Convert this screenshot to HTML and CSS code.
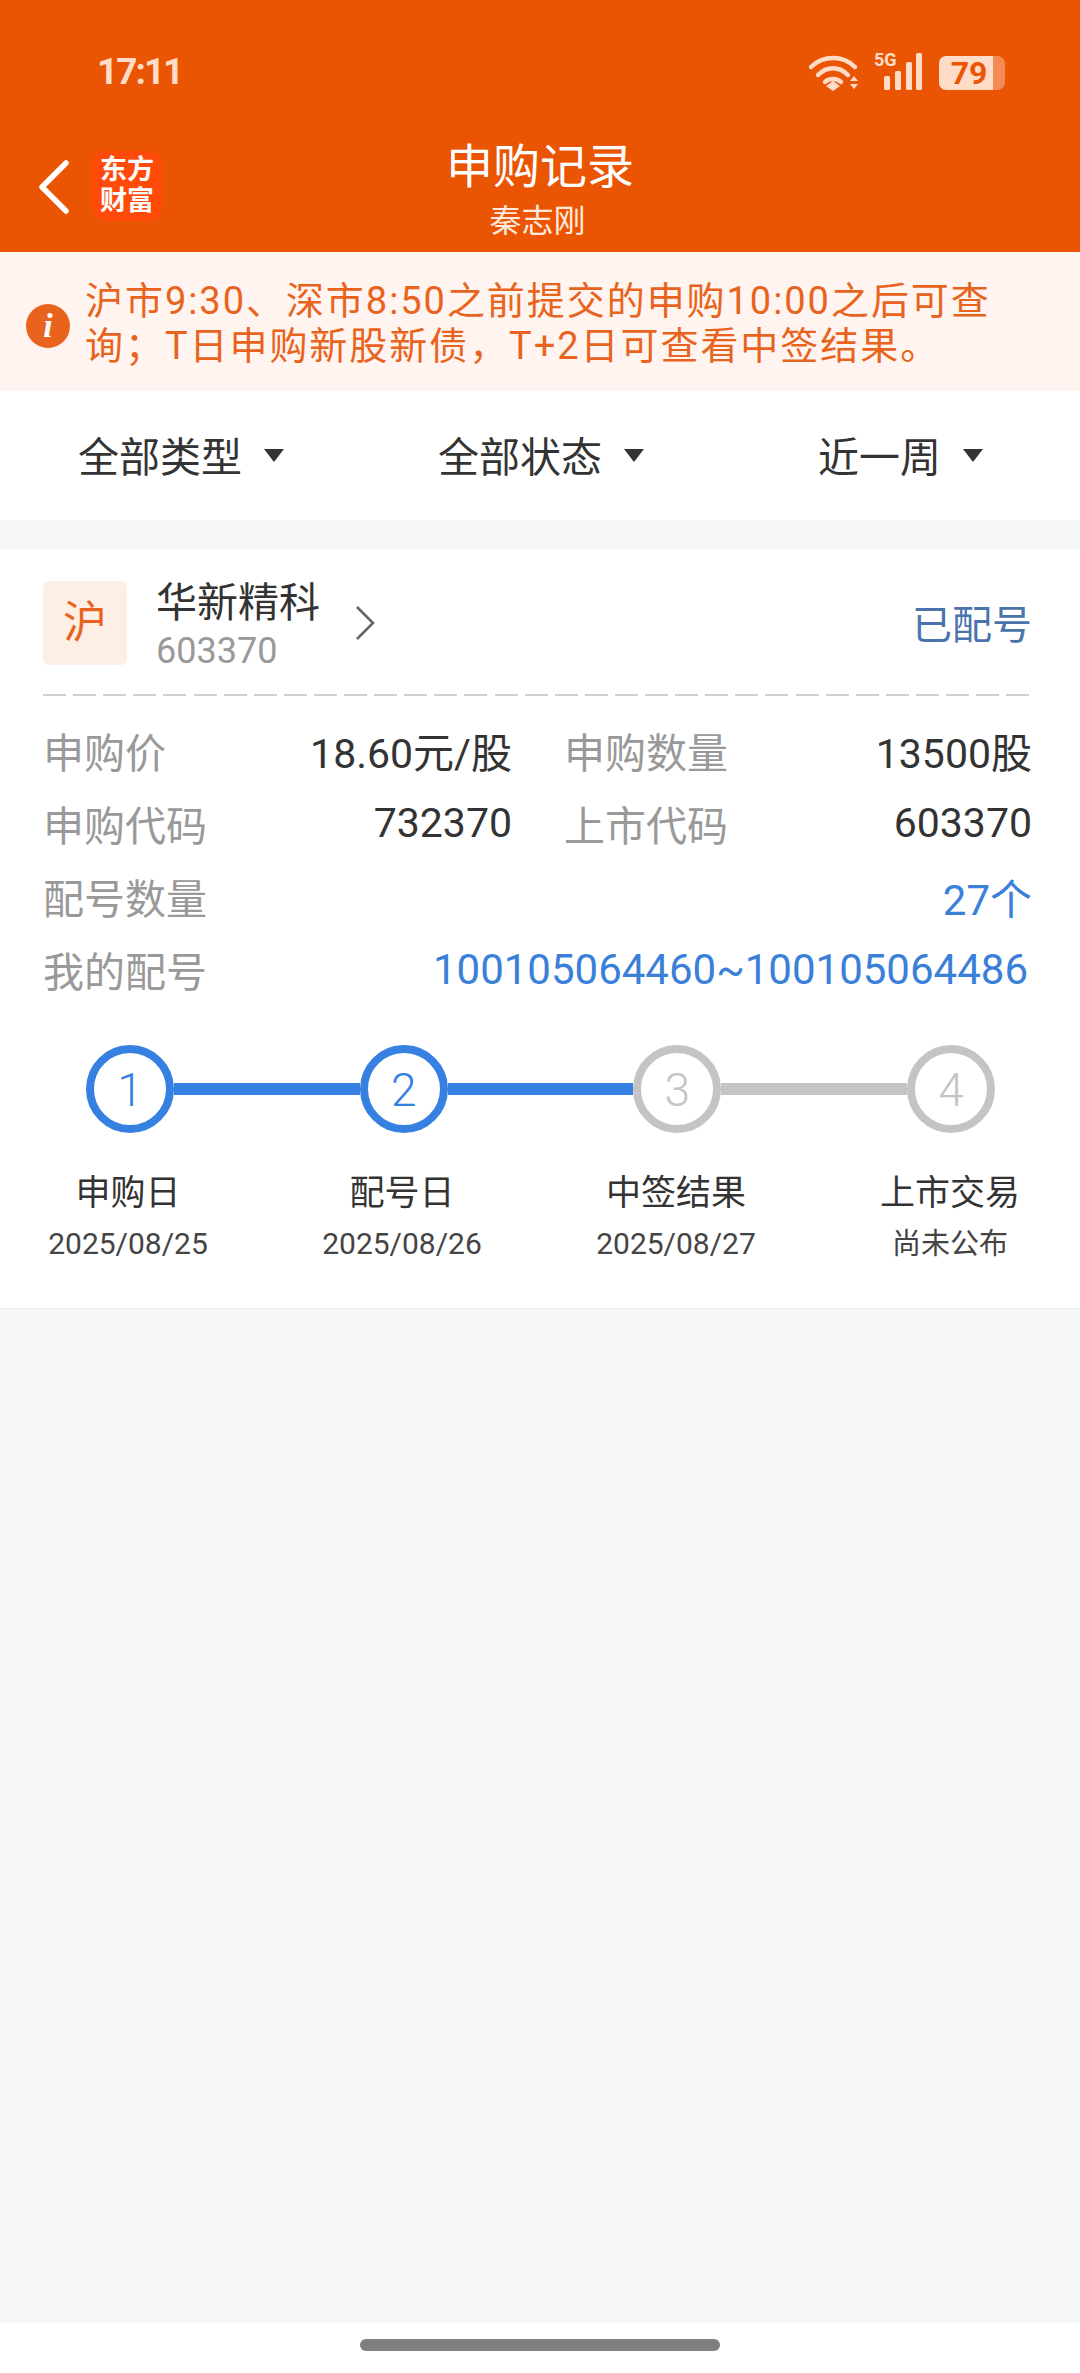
FILE: index.html
```html
<!DOCTYPE html>
<html lang="zh-CN">
<head>
  <meta charset="UTF-8" />
  <meta name="viewport" content="width=device-width, initial-scale=1.0"/>
  <title>申购记录</title>
  <link rel="stylesheet" href="styles.css">
</head>
<body>
  <header class="top">
    <div class="status">
      <span class="time">17:11</span>
      <div class="status-icons">
        <svg class="wifi" width="52" height="40" viewBox="0 0 52 40">
          <path d="M2 14C14 2 34 2 46 14" fill="none" stroke="#ffdcc8" stroke-width="4.5" stroke-linecap="round"/>
          <path d="M9 22C18 13 30 13 39 22" fill="none" stroke="#ffdcc8" stroke-width="4.5" stroke-linecap="round"/>
          <path d="M16 29C20 25 28 25 32 29" fill="none" stroke="#ffdcc8" stroke-width="4.5" stroke-linecap="round"/>
          <path d="M17 33L24 28L31 33L24 38Z" fill="#ffdcc8"/>
          <path d="M41 28L45 23L49 28ZM41 31L49 31L45 36Z" fill="#ffdcc8"/>
        </svg>
        <div class="signal">
          <span class="five-g">5G</span>
          <svg width="39" height="37" viewBox="0 0 39 37">
            <rect x="0" y="23" width="6" height="14" rx="1.5" fill="#ffdcc8"/>
            <rect x="11" y="18" width="6" height="19" rx="1.5" fill="#ffdcc8"/>
            <rect x="22" y="9" width="6" height="28" rx="1.5" fill="#ffdcc8"/>
            <rect x="32" y="0" width="6" height="37" rx="1.5" fill="#ffdcc8"/>
          </svg>
        </div>
        <div class="battery"><span class="battery-num">79</span><i class="battery-tip"></i></div>
      </div>
    </div>
    <div class="nav">
      <svg class="back" width="32" height="54" viewBox="0 0 32 54">
        <path d="M28 3L4 27L28 51" fill="none" stroke="#fff" stroke-width="5.5" stroke-linecap="round" stroke-linejoin="round"/>
      </svg>
      <div class="logo"><span>东方</span><span>财富</span></div>
      <div class="title">
        <div class="title-main">申购记录</div>
        <div class="title-sub">秦志刚</div>
      </div>
    </div>
  </header>

  <div class="notice">
    <span class="notice-icon">i</span>
    <p class="notice-text">沪市9:30、深市8:50之前提交的申购10:00之后可查询&#xFF1B;T日申购新股新债&#xFF0C;T+2日可查看中签结果。</p>
  </div>

  <div class="filters">
    <div class="filter filter-a">全部类型<i class="caret"></i></div>
    <div class="filter filter-b">全部状态<i class="caret"></i></div>
    <div class="filter filter-c">近一周<i class="caret"></i></div>
  </div>

  <main class="list">
    <section class="card">
      <div class="card-head">
        <span class="market">沪</span>
        <div class="stock">
          <div class="stock-name">华新精科</div>
          <div class="stock-code">603370</div>
        </div>
        <svg class="more" width="20" height="36" viewBox="0 0 20 36">
          <path d="M2 2L18 18L2 34" fill="none" stroke="#666" stroke-width="2.6"/>
        </svg>
        <span class="state">已配号</span>
      </div>

      <div class="fields">
        <div class="pair"><span class="key">申购价</span><span class="val">18.60元/股</span></div>
        <div class="pair"><span class="key">申购数量</span><span class="val">13500股</span></div>
        <div class="pair"><span class="key">申购代码</span><span class="val">732370</span></div>
        <div class="pair"><span class="key">上市代码</span><span class="val">603370</span></div>
        <div class="pair wide"><span class="key">配号数量</span><span class="val blue">27个</span></div>
        <div class="pair wide"><span class="key">我的配号</span><span class="val blue range">100105064460~100105064486</span></div>
      </div>

      <div class="track">
        <span class="dot on">1</span><i class="bar on"></i>
        <span class="dot on">2</span><i class="bar on"></i>
        <span class="dot">3</span><i class="bar"></i>
        <span class="dot">4</span>
      </div>
      <div class="steps">
        <div class="step"><div class="step-name">申购日</div><div class="step-date">2025/08/25</div></div>
        <div class="step"><div class="step-name">配号日</div><div class="step-date">2025/08/26</div></div>
        <div class="step"><div class="step-name">中签结果</div><div class="step-date">2025/08/27</div></div>
        <div class="step"><div class="step-name">上市交易</div><div class="step-date small">尚未公布</div></div>
      </div>
    </section>
  </main>

  <div class="home-bar"><i class="home-pill"></i></div>
</body>
</html>
```

FILE: styles.css
```css
* {
  box-sizing: border-box;
}
html, body {
  margin: 0;
  padding: 0;
}
body {
  width: 1080px;
  height: 2373px;
  display: flex;
  flex-direction: column;
  font-family: Roboto, "Noto Sans CJK SC", sans-serif;
  background: #fff;
  color: #333;
  overflow: hidden;
}

/* header */
.top {
  height: 252px;
  background: #ea5504;
  color: #fff;
  flex-shrink: 0;
}
.status {
  height: 130px;
  padding: 50px 87px 0 97px;
  display: flex;
  justify-content: space-between;
  align-items: flex-start;
}
.time {
  font-size: 37px;
  font-weight: 700;
  line-height: 44px;
  color: #ffdcc8;
  letter-spacing: -2px;
}
.status-icons {
  display: flex;
  align-items: flex-start;
  padding-top: 3px;
}
.wifi {
  margin-right: 13px;
}
.signal {
  position: relative;
  width: 50px;
  height: 37px;
  margin-right: 15px;
  padding-left: 10px;
}
.five-g {
  position: absolute;
  left: 0;
  top: -3px;
  font-size: 18px;
  line-height: 20px;
  font-weight: 700;
  color: #ffdcc8;
}
.battery {
  width: 54px;
  height: 34px;
  margin-top: 3px;
  position: relative;
  background: #ffdcc8;
  border-radius: 7px 0 0 7px;
  text-align: center;
}
.battery-num {
  font-size: 32px;
  line-height: 34px;
  font-weight: 700;
  color: #ea5504;
  padding-left: 6px;
}
.battery-tip {
  position: absolute;
  left: 54px;
  top: 0;
  width: 12px;
  height: 34px;
  background: #f58b54;
  border-radius: 0 8px 8px 0;
}
.nav {
  height: 122px;
  display: flex;
  align-items: flex-start;
  position: relative;
  padding: 30px 0 0 38px;
}
.logo {
  width: 70px;
  height: 70px;
  margin: -9px 0 0 22px;
  background: #ff4a0a;
  border-radius: 14px;
  display: flex;
  flex-direction: column;
  align-items: center;
  justify-content: center;
  font-size: 27px;
  line-height: 31px;
  font-weight: 700;
}
.title {
  position: absolute;
  left: 0;
  right: 0;
  top: 7px;
  text-align: center;
}
.title-main {
  font-size: 47px;
  line-height: 60px;
}
.title-sub {
  font-size: 32px;
  line-height: 42px;
  color: #ffe9dd;
  margin-top: 3px;
  padding-right: 5px;
}

/* notice */
.notice {
  height: 139px;
  background: #fff4ef;
  padding: 27px 30px 0 26px;
  display: flex;
  align-items: flex-start;
  flex-shrink: 0;
}
.notice-icon {
  width: 44px;
  height: 44px;
  margin-top: 25px;
  border-radius: 50%;
  background: #e8641e;
  color: #fff;
  font-family: "Liberation Serif", serif;
  font-style: italic;
  font-weight: 700;
  font-size: 34px;
  line-height: 44px;
  text-align: center;
  flex-shrink: 0;
}
.notice-text {
  margin: 0 0 0 15px;
  width: 935px;
  color: #e8641e;
  font-size: 38px;
  line-height: 45px;
  letter-spacing: 1.95px;
}

/* filters */
.filters {
  height: 129px;
  background: #fff;
  display: flex;
  align-items: center;
  flex-shrink: 0;
  font-size: 41px;
  padding-top: 5px;
}
.filter {
  display: flex;
  align-items: center;
  line-height: 52px;
}
.filter-a {
  margin-left: 78px;
}
.filter-b {
  margin-left: 154px;
}
.filter-c {
  margin-left: 174px;
}
.caret {
  width: 0;
  height: 0;
  margin-left: 22px;
  margin-top: -6px;
  border-left: 10px solid transparent;
  border-right: 10px solid transparent;
  border-top: 13px solid #333;
}

/* list */
.list {
  flex: 1;
  background: #f6f7f9;
  padding-top: 29px;
}
.card {
  height: 760px;
  background: #fff;
  border-bottom: 1px solid #eeeef0;
}
.card-head {
  height: 147px;
  margin: 0 50px 0 43px;
  padding-top: 32px;
  display: flex;
  align-items: flex-start;
  /* long dashes, a border can't do this period */
  background: repeating-linear-gradient(90deg, #d0d0d0 0 23px, transparent 23px 30.1px) left bottom / 100% 2px no-repeat;
}
.market {
  width: 84px;
  height: 84px;
  background: #fdeee6;
  border-radius: 6px;
  color: #e8641e;
  font-size: 44px;
  line-height: 84px;
  text-align: center;
}
.stock {
  margin-left: 29px;
}
.stock-name {
  font-size: 41px;
  line-height: 52px;
  margin-top: -4px;
}
.stock-code {
  font-size: 36px;
  line-height: 42px;
  color: #999;
  margin-top: 1px;
}
.more {
  margin: 24px 0 0 35px;
}
.state {
  margin-left: auto;
  margin-right: -2px;
  margin-top: 19px;
  font-size: 40px;
  line-height: 52px;
  color: #4a74ab;
}
.fields {
  margin: 28px 48px 0 43px;
  display: grid;
  grid-template-columns: 469px 468px;
  column-gap: 52px;
  row-gap: 21px;
}
.pair {
  display: flex;
  justify-content: space-between;
  align-items: center;
  height: 52px;
}
.wide {
  grid-column: 1 / 3;
}
.key {
  font-size: 41px;
  color: #999;
}
.val {
  font-size: 41px;
  color: #333;
}
.blue {
  font-size: 42px;
  color: #3a7fd8;
}
.range {
  padding-right: 4px;
}

/* steps */
.track {
  margin: 50px 85px 0 86px;
  display: flex;
  align-items: center;
}
.dot {
  width: 88px;
  height: 88px;
  border: 8px solid #c4c4c4;
  border-radius: 50%;
  flex-shrink: 0;
  color: #c4c4c4;
  font-size: 46px;
  font-weight: 300;
  line-height: 74px;
  text-align: center;
  background: #fff;
}
.dot.on {
  border-color: #3580e0;
  color: #3580e0;
}
.bar {
  flex: 1;
  height: 12px;
  background: #c4c4c4;
}
.bar.on {
  background: #3580e0;
}
.steps {
  margin: 39px 0 0;
  padding: 0 23px;
  display: grid;
  grid-template-columns: repeat(4, 210px);
  column-gap: 64px;
  text-align: center;
}
.step-name {
  font-size: 35px;
  line-height: 44px;
}
.step-date {
  font-size: 30px;
  line-height: 40px;
  margin-top: 8px;
  color: #444;
}
.step-date.small {
  font-size: 29px;
}

/* bottom */
.home-bar {
  height: 50px;
  background: #fff;
  flex-shrink: 0;
  padding-top: 16px;
  display: flex;
  justify-content: center;
  align-items: flex-start;
}
.home-pill {
  width: 360px;
  height: 12px;
  border-radius: 6px;
  background: #7f7f7f;
}
```
